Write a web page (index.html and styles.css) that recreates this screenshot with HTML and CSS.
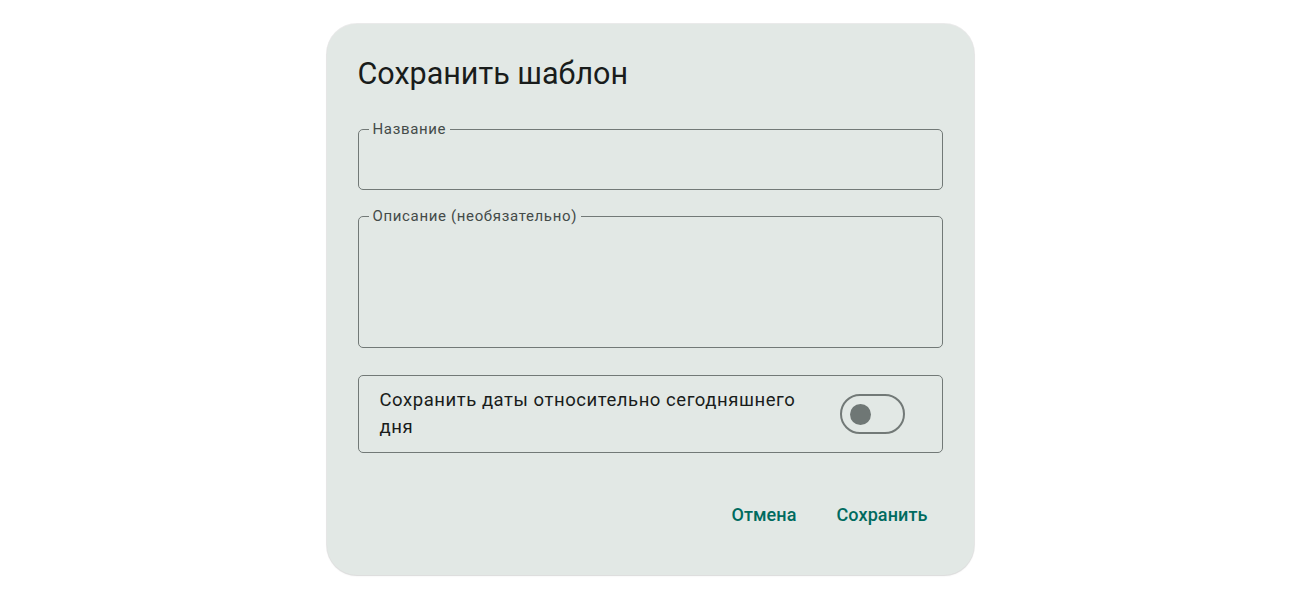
FILE: index.html
```html
<!DOCTYPE html>
<html lang="ru">
<head>
<meta charset="utf-8">
<title>Сохранить шаблон</title>
<link rel="stylesheet" href="styles.css">
</head>
<body>
<div class="stage">
  <div class="dialog">
    <h1 class="title">Сохранить шаблон</h1>
    <fieldset class="field field-name">
      <legend>Название</legend>
    </fieldset>
    <fieldset class="field field-desc">
      <legend>Описание (необязательно)</legend>
    </fieldset>
    <div class="toggle-row">
      <div class="toggle-text">Сохранить даты относительно сегодняшнего дня</div>
      <div class="switch"><div class="thumb"></div></div>
    </div>
    <div class="actions">
      <button class="btn">Отмена</button>
      <button class="btn">Сохранить</button>
    </div>
  </div>
</div>
</body>
</html>
```

FILE: styles.css
```css
html, body {
  margin: 0;
  padding: 0;
  background: #ffffff;
}
body {
  font-family: Roboto, "Noto Sans", sans-serif;
  width: 1300px;
  height: 600px;
  overflow: hidden;
}
.stage {
  display: flex;
  justify-content: center;
  padding-top: 24px;
}
.dialog {
  box-sizing: border-box;
  width: 647px;
  height: 551px;
  background: #e2e8e5;
  border-radius: 30px;
  box-shadow: 0 0 0 1px rgba(0, 0, 0, 0.08), 0 1px 2px rgba(0, 0, 0, 0.08);
  padding: 30px 31px 36px 31px;
  display: flex;
  flex-direction: column;
}
.title {
  margin: 0;
  font-size: 30.5px;
  line-height: 40px;
  font-weight: 400;
  color: #191c1b;
}
.field {
  box-sizing: border-box;
  margin: 0;
  padding: 0;
  border: 1.5px solid #727977;
  border-radius: 5px;
  min-width: 0;
}
.field legend {
  margin-left: 10px;
  padding: 0 4px;
  font-size: 15px;
  line-height: 16px;
  letter-spacing: 0.65px;
  color: #444b49;
}
.field-name {
  margin-top: 27px;
  height: 69px;
}
.field-desc {
  margin-top: 18px;
  height: 140px;
}
.toggle-row {
  box-sizing: border-box;
  margin-top: 27px;
  height: 78px;
  border: 1.5px solid #727977;
  border-radius: 5px;
  display: flex;
  align-items: center;
  padding: 0 37px 0 21px;
}
.toggle-text {
  flex: 1;
  padding-right: 30px;
  font-size: 18.5px;
  line-height: 27px;
  letter-spacing: 0.55px;
  color: #191c1b;
}
.switch {
  box-sizing: border-box;
  width: 65px;
  height: 40px;
  border: 2.5px solid #727977;
  border-radius: 20px;
  background: #e2e8e5;
  display: flex;
  align-items: center;
  padding-left: 8px;
}
.thumb {
  width: 21px;
  height: 21px;
  border-radius: 50%;
  background: #6f7775;
}
.actions {
  margin-top: auto;
  display: flex;
  justify-content: flex-end;
  gap: 10px;
}
.btn {
  border: none;
  background: transparent;
  height: 50px;
  padding: 0 15px;
  font-family: Roboto, "Noto Sans", sans-serif;
  font-size: 18px;
  font-weight: 500;
  letter-spacing: 0.1px;
  color: #006b5f;
  cursor: pointer;
}
```
